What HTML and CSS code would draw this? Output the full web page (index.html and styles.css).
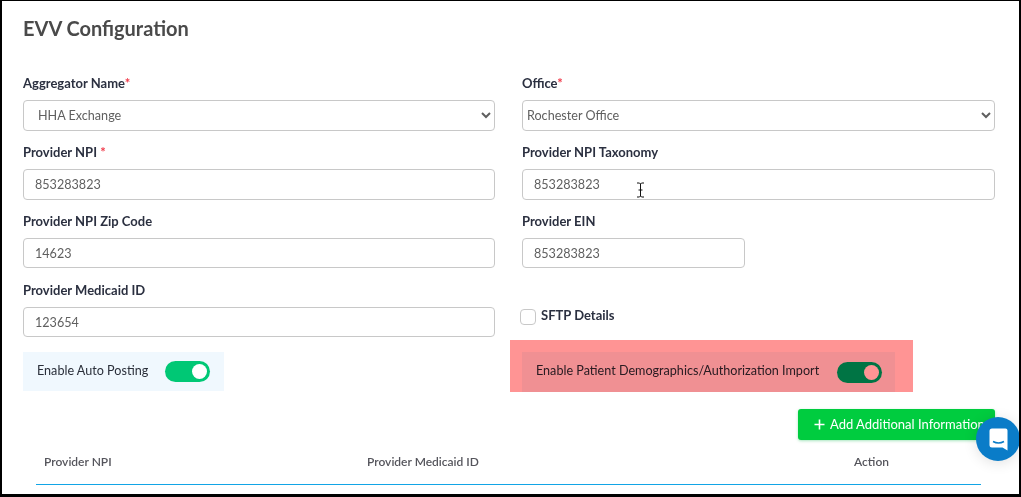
FILE: index.html
```html
<!DOCTYPE html>
<html lang="en">
<head>
<meta charset="utf-8">
<title>EVV Configuration</title>
<link rel="stylesheet" href="styles.css">
</head>
<body>
<main class="frame">
  <h1 class="title">EVV Configuration</h1>
  <form class="form-grid">
    <div class="field">
      <label class="label">Aggregator Name<span class="req">*</span></label>
      <select class="control select-a"><option>HHA Exchange</option></select>
    </div>
    <div class="field">
      <label class="label">Office<span class="req">*</span></label>
      <select class="control select-b"><option>Rochester Office</option></select>
    </div>
    <div class="field">
      <label class="label">Provider NPI <span class="req">*</span></label>
      <input class="control input-a" value="853283823">
    </div>
    <div class="field">
      <label class="label">Provider NPI Taxonomy</label>
      <input class="control input-b" value="853283823">
    </div>
    <div class="field">
      <label class="label">Provider NPI Zip Code</label>
      <input class="control input-a" value="14623">
    </div>
    <div class="field">
      <label class="label">Provider EIN</label>
      <input class="control input-b short" value="853283823">
    </div>
    <div class="field">
      <label class="label">Provider Medicaid ID</label>
      <input class="control input-a" value="123654">
    </div>
    <div class="check-cell">
      <span class="checkbox"></span>
      <span class="label check-label">SFTP Details</span>
    </div>
    <div class="toggle-cell">
      <div class="toggle-box">
        <span class="toggle-text">Enable Auto Posting</span>
        <span class="switch"><span class="thumb"></span></span>
      </div>
    </div>
    <div class="toggle-cell">
      <div class="toggle-box wide">
        <span class="toggle-text">Enable Patient Demographics/Authorization Import</span>
        <span class="switch"><span class="thumb"></span></span>
      </div>
    </div>
  </form>
  <div class="actions">
    <button class="add-btn" type="button">
      <svg class="plus" width="11" height="11" viewBox="0 0 11 11"><path d="M5.500 0.500v10M0.500 5.500h10" stroke="#fff" stroke-width="1.600" fill="none"/></svg>
      <span class="add-text">Add Additional Information</span>
    </button>
  </div>
  <table class="info-table">
    <thead>
      <tr>
        <th class="col-npi">Provider NPI</th>
        <th class="col-med">Provider Medicaid ID</th>
        <th class="col-act">Action</th>
      </tr>
    </thead>
  </table>

  <div class="highlight"></div>
  <svg class="cursor" width="9" height="16" viewBox="0 0 9 16"><path d="M1 1h2.500l1 1 1-1H8M4.500 2v12M1 15h2.500l1-1 1 1H8M2.500 8h4" stroke="#111" stroke-width="1" fill="none"/></svg>
  <div class="chat">
    <svg width="19" height="23" viewBox="0 0 19 23"><path d="M3 0.500h13.500a2 2 0 0 1 2 2v20l-5-3H3a2.500 2.500 0 0 1-2.500-2.500V3A2.500 2.500 0 0 1 3 0.500z" fill="#fff"/><path d="M4 13.500q5.500 3 11 0" stroke="#0a7cc8" stroke-width="1.500" fill="none"/></svg>
  </div>
</main>
</body>
</html>
```
FILE: styles.css
```css
* { box-sizing: border-box; }
html, body { margin: 0; height: 100%; }
body { background: #fff; font-family: Lato, "Liberation Sans", sans-serif; overflow: hidden; }

.frame {
  position: relative;
  height: 497px;
  border: solid #000;
  border-width: 1px 2px 3px 2px;
  padding: 0 24px 0 21px;
  overflow: hidden;
  background: #fff;
}

.title {
  margin: 15px 0 0;
  height: 24px;
  font-size: 20px;
  line-height: 24px;
  font-weight: 700;
  color: #4a4a4a;
}

.form-grid {
  display: grid;
  grid-template-columns: 472px 473px;
  column-gap: 27px;
  margin-top: 35px;
}

.field { display: flex; flex-direction: column; height: 69px; }

.label {
  font-size: 13px;
  line-height: 16px;
  font-weight: 700;
  color: #2b3040;
}
.field .label { margin-bottom: 9px; }
.req { color: #f03a4a; }

.control {
  height: 31px;
  width: 100%;
  border: 1px solid #c8c8c8;
  border-radius: 4px;
  background: #fff;
  font-family: inherit;
  font-size: 12.600px;
  color: #5f5f5f;
  outline: none;
}
.select-a { padding: 0 10px; }
.select-b { padding: 0; }
.input-a { padding: 0 11px 1px; }
.input-b { padding: 0 11px 1px; }
.field:nth-child(n+5) .control { height: 30px; padding-bottom: 0; }
.short { width: 223px; }

.check-cell { display: flex; align-items: center; gap: 5px; margin-left: -2px; }
.checkbox {
  width: 16px;
  height: 16px;
  border: 1.500px solid #c8c8c8;
  border-radius: 4px;
  background: #fff;
}
.check-label { position: relative; top: -2px; }

.toggle-cell { margin-top: 1px; }
.toggle-box {
  display: inline-flex;
  align-items: center;
  gap: 17px;
  width: 201px;
  height: 39px;
  padding-left: 14px;
  background: #f0f8fe;
}
.toggle-box.wide { width: 373px; height: 40px; gap: 18px; }
.toggle-text { font-size: 12.600px; color: #2a2f3a; position: relative; top: -1px; }
.wide .toggle-text { top: -2px; }
.switch {
  display: flex;
  align-items: center;
  justify-content: flex-end;
  width: 45px;
  height: 21px;
  padding-right: 3px;
  border-radius: 11px;
  background: #00c875;
}
.thumb { width: 15px; height: 15px; border-radius: 50%; background: #fff; }

.actions { display: flex; justify-content: flex-end; margin-top: 17px; }
.add-btn {
  display: flex;
  align-items: center;
  gap: 5px;
  width: 197px;
  height: 31px;
  padding: 0 0 0 16px;
  border: 0;
  border-radius: 3px;
  background: #00cc3f;
  box-shadow: 0 1px 3px rgba(0, 180, 70, .35);
  color: #fff;
  font-family: inherit;
  font-size: 13px;
  white-space: nowrap;
}
.add-text { position: relative; top: -1px; }

.info-table {
  width: 945px;
  margin: 5px 0 0 13px;
  border-collapse: collapse;
  table-layout: fixed;
}
.info-table th {
  height: 39px;
  padding: 0 8px 6px;
  border-bottom: 1px solid #12a5e6;
  font-size: 12px;
  font-weight: 600;
  text-align: left;
  color: #55555c;
}
.col-npi { width: 323px; }
.col-med { width: 470px; }
.info-table .col-act { padding-left: 25px; }

.highlight {
  position: absolute;
  left: 508px;
  top: 339px;
  width: 403px;
  height: 52px;
  background: #ff9494;
  mix-blend-mode: multiply;
}
.cursor { position: absolute; left: 634px; top: 181px; }
.chat {
  position: absolute;
  left: 974px;
  top: 416px;
  width: 44px;
  height: 44px;
  display: flex;
  align-items: center;
  justify-content: center;
  border-radius: 50%;
  background: #0a7cc8;
  box-shadow: 0 2px 14px rgba(0, 0, 0, .12);
}
```
